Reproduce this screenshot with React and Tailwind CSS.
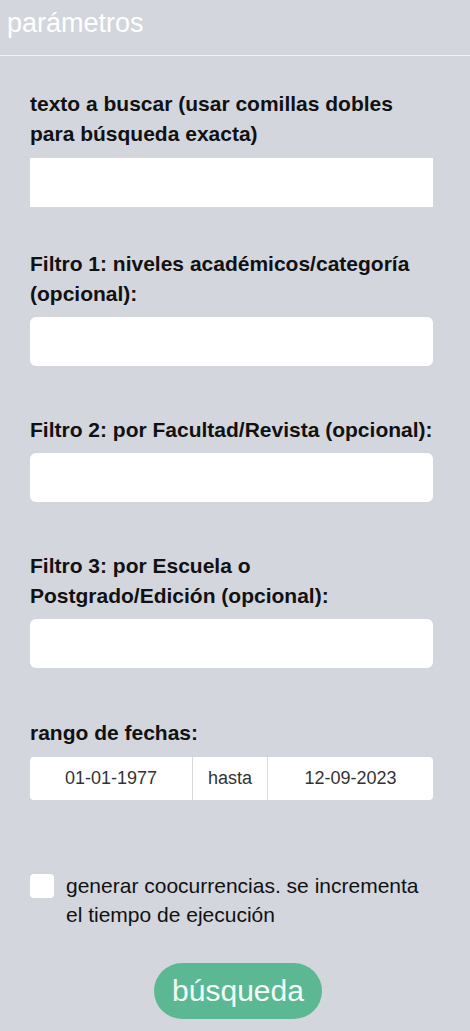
import React, { useState } from 'react';

const font = { fontFamily: '"Liberation Sans", Arial, sans-serif' };

const Field = ({ label, rounded = true, className = '' }) => (
  <div className={className}>
    <label className="block text-[21px] font-bold leading-[30px] text-[#111]">{label}</label>
    <input
      type="text"
      className={`mt-[8px] block h-[49px] w-full bg-white px-3 text-[18px] outline-none ${rounded ? 'rounded-[6px]' : ''}`}
    />
  </div>
);

export default function App() {
  const [cooc, setCooc] = useState(false);

  return (
    <div className="min-h-[1031px] w-full bg-[#d3d6dd]" style={font}>
      <div className="h-[56px] border-b border-[#f2f3f6] px-[7px] pt-[10px]">
        <h1 className="text-[27px] leading-[27px] text-white">parámetros</h1>
      </div>

      <div className="pl-[30px] pr-[37px] pt-[33px]">
        <div>
          <label className="block text-[21px] font-bold leading-[30px] text-[#111]">
            texto a buscar (usar comillas dobles para búsqueda exacta)
          </label>
          <input type="text" className="mt-[9px] block h-[49px] w-full bg-white px-3 text-[18px] outline-none" />
        </div>

        <Field className="mt-[42px]" label="Filtro 1: niveles académicos/categoría (opcional):" />
        <Field className="mt-[49px]" label="Filtro 2: por Facultad/Revista (opcional):" />
        <Field className="mt-[49px]" label="Filtro 3: por Escuela o Postgrado/Edición (opcional):" />

        <div className="mt-[50px]">
          <label className="block text-[21px] font-bold leading-[30px] text-[#111]">rango de fechas:</label>
          <div className="mt-[9px] flex h-[43px] w-full overflow-hidden rounded-[4px] bg-white text-[18px] text-[#333]">
            <div className="flex w-[163px] items-center justify-center border-r border-[#d9d9d9]">01-01-1977</div>
            <div className="flex w-[75px] items-center justify-center border-r border-[#d9d9d9]">hasta</div>
            <div className="flex flex-1 items-center justify-center">12-09-2023</div>
          </div>
        </div>

        <div className="mt-[71px] flex items-start">
          <button
            type="button"
            onClick={() => setCooc(!cooc)}
            className="mt-[3px] h-[24px] w-[24px] shrink-0 rounded-[4px] bg-white"
          >
            {cooc && <span className="text-[16px] text-[#5bb891]">✓</span>}
          </button>
          <span className="ml-[12px] text-[21px] leading-[29px] text-[#111]">
            generar coocurrencias. se incrementa el tiempo de ejecución
          </span>
        </div>

        <div className="mt-[34px] flex justify-center">
          <button
            type="button"
            className="ml-[13px] h-[56px] w-[168px] rounded-full bg-[#5cb892] text-[30px] leading-[56px] text-[#f2fff9]"
          >
            búsqueda
          </button>
        </div>
      </div>
    </div>
  );
}
